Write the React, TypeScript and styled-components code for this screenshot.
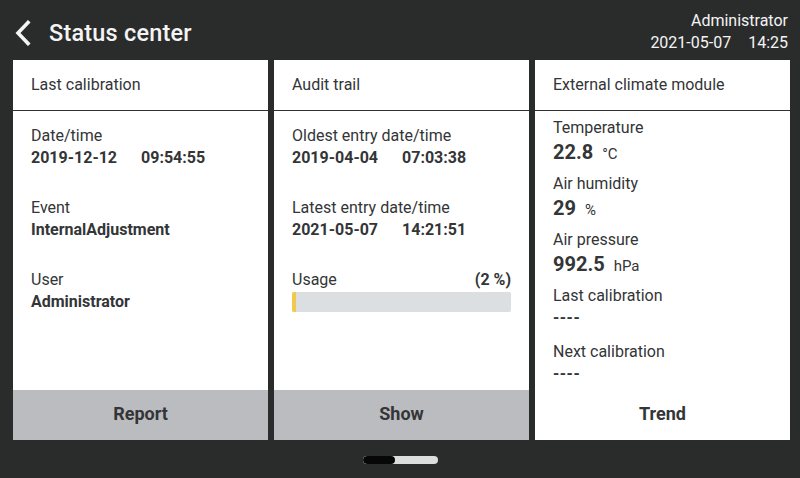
import React from "react";
import styled, { createGlobalStyle } from "styled-components";

const Global = createGlobalStyle`
  html, body { margin: 0; padding: 0; background: #2a2c2b; }
  body { font-family: Roboto, "Noto Sans", sans-serif; }
  * { box-sizing: border-box; }
`;

const Screen = styled.div`
  width: 800px;
  height: 478px;
  background: #2a2c2b;
  display: flex;
  flex-direction: column;
  color: #333537;
`;

const TopBar = styled.header`
  height: 60px;
  flex-shrink: 0;
  display: flex;
  align-items: center;
  justify-content: space-between;
  padding: 0 12px 0 12px;
  color: #f4f4f4;
`;

const TitleGroup = styled.div`
  display: flex;
  align-items: center;
  gap: 15px;
  padding-top: 6px;
`;

const BackButton = styled.button`
  background: none;
  border: none;
  padding: 0;
  width: 22px;
  height: 28px;
  display: flex;
  align-items: center;
  justify-content: center;
`;

const Title = styled.h1`
  margin: 0;
  font-size: 23.5px;
  font-weight: 500;
  letter-spacing: 0.2px;
`;

const UserInfo = styled.div`
  display: flex;
  flex-direction: column;
  align-items: flex-end;
  font-size: 16px;
  line-height: 22px;
  padding-top: 3px;
`;

const DateRow = styled.div`
  display: flex;
  gap: 17px;
`;

const Cards = styled.main`
  display: flex;
  gap: 6px;
  padding: 0 10px 0 13px;
  height: 380px;
  flex-shrink: 0;
`;

const Card = styled.section`
  flex: 0 0 255px;
  background: #fff;
  display: flex;
  flex-direction: column;
`;

const CardHeader = styled.div`
  height: 51px;
  flex-shrink: 0;
  border-bottom: 1px solid #2f3133;
  padding: 0 18px 2px 18px;
  display: flex;
  align-items: center;
  font-size: 16px;
`;

const CardBody = styled.div<{ $top: number }>`
  flex: 1;
  min-height: 0;
  overflow: hidden;
  padding: ${(p) => p.$top}px 18px 0 18px;
  display: flex;
  flex-direction: column;
`;

const Group = styled.div<{ $gap: number }>`
  display: flex;
  flex-direction: column;
  margin-bottom: ${(p) => p.$gap}px;
`;

const Label = styled.div`
  font-size: 16px;
  line-height: 22px;
`;

const Value = styled.div`
  font-size: 16px;
  line-height: 22px;
  font-weight: 700;
  display: flex;
  gap: 24px;
`;

const Reading = styled.div`
  height: 26px;
  display: flex;
  align-items: baseline;
  gap: 9px;
`;

const BigNumber = styled.span`
  font-size: 20px;
  font-weight: 700;
  line-height: 26px;
`;

const Unit = styled.span`
  font-size: 15px;
`;

const Dashes = styled.div`
  font-size: 16px;
  font-weight: 700;
  letter-spacing: 0.5px;
  line-height: 22px;
  height: 22px;
`;

const UsageHead = styled.div`
  display: flex;
  justify-content: space-between;
  font-size: 16px;
  line-height: 22px;
`;

const UsagePercent = styled.span`
  font-weight: 700;
`;

const Track = styled.div`
  margin-top: 1px;
  height: 20px;
  background: #dcdfe1;
  border-radius: 2px;
  overflow: hidden;
`;

const Fill = styled.div`
  height: 100%;
  background: #f2c94a;
`;

const ActionButton = styled.button<{ $plain?: boolean }>`
  height: 50px;
  flex-shrink: 0;
  border: none;
  padding: 0 0 3px 0;
  background: ${(p) => (p.$plain ? "#fff" : "#bbbcbf")};
  font-family: Roboto, sans-serif;
  font-size: 18px;
  font-weight: 700;
  color: #333537;
  cursor: pointer;
`;

const Footer = styled.footer`
  flex: 1;
  display: flex;
  align-items: center;
  justify-content: center;
  padding-top: 2px;
`;

const Pager = styled.div`
  width: 75px;
  height: 8px;
  border-radius: 4px;
  background: #dcdedd;
  position: relative;
  overflow: hidden;
`;

const PagerActive = styled.div`
  position: absolute;
  left: 0;
  top: 0;
  width: 32px;
  height: 8px;
  border-radius: 4px;
  background: #070707;
`;

export default function App() {
  const usage = 2;
  return (
    <>
      <Global />
      <Screen>
        <TopBar>
          <TitleGroup>
            <BackButton aria-label="Back">
              <svg width="20" height="26" viewBox="0 0 20 26">
                <path d="M15 2.5 L5 13 L15 23.5" fill="none" stroke="#f4f4f4" strokeWidth="3.6" strokeLinecap="square" />
              </svg>
            </BackButton>
            <Title>Status center</Title>
          </TitleGroup>
          <UserInfo>
            <div>Administrator</div>
            <DateRow>
              <span>2021-05-07</span>
              <span>14:25</span>
            </DateRow>
          </UserInfo>
        </TopBar>

        <Cards>
          <Card>
            <CardHeader>Last calibration</CardHeader>
            <CardBody $top={14}>
              <Group $gap={28}>
                <Label>Date/time</Label>
                <Value>
                  <span>2019-12-12</span>
                  <span>09:54:55</span>
                </Value>
              </Group>
              <Group $gap={28}>
                <Label>Event</Label>
                <Value>InternalAdjustment</Value>
              </Group>
              <Group $gap={28}>
                <Label>User</Label>
                <Value>Administrator</Value>
              </Group>
            </CardBody>
            <ActionButton>Report</ActionButton>
          </Card>

          <Card>
            <CardHeader>Audit trail</CardHeader>
            <CardBody $top={14}>
              <Group $gap={28}>
                <Label>Oldest entry date/time</Label>
                <Value>
                  <span>2019-04-04</span>
                  <span>07:03:38</span>
                </Value>
              </Group>
              <Group $gap={28}>
                <Label>Latest entry date/time</Label>
                <Value>
                  <span>2021-05-07</span>
                  <span>14:21:51</span>
                </Value>
              </Group>
              <Group $gap={0}>
                <UsageHead>
                  <span>Usage</span>
                  <UsagePercent>({usage} %)</UsagePercent>
                </UsageHead>
                <Track>
                  <Fill style={{ width: `${usage}%` }} />
                </Track>
              </Group>
            </CardBody>
            <ActionButton>Show</ActionButton>
          </Card>

          <Card>
            <CardHeader>External climate module</CardHeader>
            <CardBody $top={6}>
              <Group $gap={8}>
                <Label>Temperature</Label>
                <Reading>
                  <BigNumber>22.8</BigNumber>
                  <Unit>°C</Unit>
                </Reading>
              </Group>
              <Group $gap={8}>
                <Label>Air humidity</Label>
                <Reading>
                  <BigNumber>29</BigNumber>
                  <Unit>%</Unit>
                </Reading>
              </Group>
              <Group $gap={8}>
                <Label>Air pressure</Label>
                <Reading>
                  <BigNumber>992.5</BigNumber>
                  <Unit>hPa</Unit>
                </Reading>
              </Group>
              <Group $gap={12}>
                <Label>Last calibration</Label>
                <Dashes>----</Dashes>
              </Group>
              <Group $gap={0}>
                <Label>Next calibration</Label>
                <Dashes>----</Dashes>
              </Group>
            </CardBody>
            <ActionButton $plain>Trend</ActionButton>
          </Card>
        </Cards>

        <Footer>
          <Pager>
            <PagerActive />
          </Pager>
        </Footer>
      </Screen>
    </>
  );
}
